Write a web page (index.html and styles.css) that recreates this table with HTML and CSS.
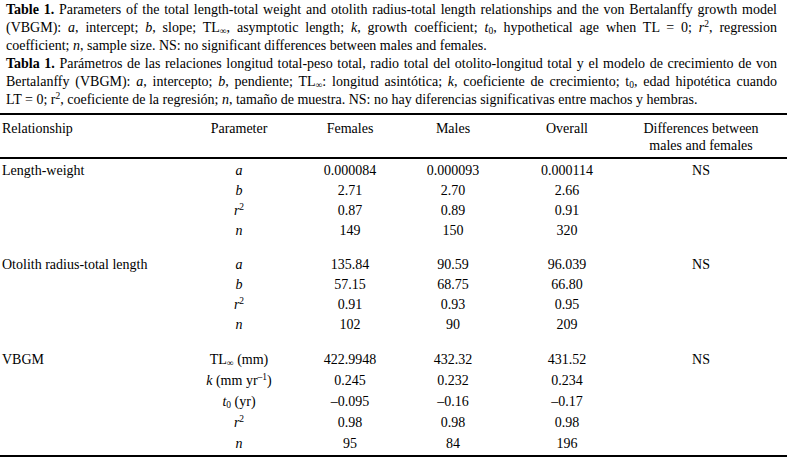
FILE: index.html
```html
<!DOCTYPE html>
<html lang="en">
<head>
<meta charset="utf-8">
<title>Table 1</title>
<link rel="stylesheet" href="styles.css">
</head>
<body>
<div class="caption">
  <p class="para">
    <span class="ln"><b>Table 1.</b> Parameters of the total length-total weight and otolith radius-total length relationships and the von Bertalanffy growth model</span>
    <span class="ln">(VBGM): <i>a</i>, intercept; <i>b</i>, slope; TL<sub>∞</sub>, asymptotic length; <i>k</i>, growth coefficient; <i>t</i><sub>0</sub>, hypothetical age when TL = 0; <i>r</i><sup>2</sup>, regression</span>
    <span class="ln last">coefficient; <i>n</i>, sample size. NS: no significant differences between males and females.</span>
  </p>
  <p class="para">
    <span class="ln"><b>Tabla 1.</b> Parámetros de las relaciones longitud total-peso total, radio total del otolito-longitud total y el modelo de crecimiento de von</span>
    <span class="ln">Bertalanffy (VBGM): <i>a</i>, intercepto; <i>b</i>, pendiente; TL<sub>∞</sub>: longitud asintótica; <i>k</i>, coeficiente de crecimiento; t<sub>0</sub>, edad hipotética cuando</span>
    <span class="ln last">LT = 0; r<sup>2</sup>, coeficiente de la regresión; <i>n</i>, tamaño de muestra. NS: no hay diferencias significativas entre machos y hembras.</span>
  </p>
</div>
<table class="data">
  <colgroup>
    <col class="c-rel">
    <col class="c-par">
    <col class="c-fem">
    <col class="c-mal">
    <col class="c-all">
    <col class="c-dif">
  </colgroup>
  <thead>
    <tr>
      <th class="rel">Relationship</th>
      <th>Parameter</th>
      <th>Females</th>
      <th>Males</th>
      <th>Overall</th>
      <th class="dif">Differences between<br>males and females</th>
    </tr>
  </thead>
  <tbody class="group">
    <tr><td class="rel">Length-weight</td><td><i>a</i></td><td>0.000084</td><td>0.000093</td><td>0.000114</td><td class="dif">NS</td></tr>
    <tr><td class="rel"></td><td><i>b</i></td><td>2.71</td><td>2.70</td><td>2.66</td><td class="dif"></td></tr>
    <tr><td class="rel"></td><td><i>r</i><sup>2</sup></td><td>0.87</td><td>0.89</td><td>0.91</td><td class="dif"></td></tr>
    <tr><td class="rel"></td><td><i>n</i></td><td>149</td><td>150</td><td>320</td><td class="dif"></td></tr>
  </tbody>
  <tbody class="group">
    <tr><td class="rel">Otolith radius-total length</td><td><i>a</i></td><td>135.84</td><td>90.59</td><td>96.039</td><td class="dif">NS</td></tr>
    <tr><td class="rel"></td><td><i>b</i></td><td>57.15</td><td>68.75</td><td>66.80</td><td class="dif"></td></tr>
    <tr><td class="rel"></td><td><i>r</i><sup>2</sup></td><td>0.91</td><td>0.93</td><td>0.95</td><td class="dif"></td></tr>
    <tr><td class="rel"></td><td><i>n</i></td><td>102</td><td>90</td><td>209</td><td class="dif"></td></tr>
  </tbody>
  <tbody class="group tall">
    <tr><td class="rel">VBGM</td><td>TL<sub>∞</sub> (mm)</td><td>422.9948</td><td>432.32</td><td>431.52</td><td class="dif">NS</td></tr>
    <tr><td class="rel"></td><td><i>k</i> (mm yr<sup>–1</sup>)</td><td>0.245</td><td>0.232</td><td>0.234</td><td class="dif"></td></tr>
    <tr><td class="rel"></td><td><i>t</i><sub>0</sub> (yr)</td><td>–0.095</td><td>–0.16</td><td>–0.17</td><td class="dif"></td></tr>
    <tr><td class="rel"></td><td><i>r</i><sup>2</sup></td><td>0.98</td><td>0.98</td><td>0.98</td><td class="dif"></td></tr>
    <tr><td class="rel"></td><td><i>n</i></td><td>95</td><td>84</td><td>196</td><td class="dif"></td></tr>
  </tbody>
</table>
</body>
</html>
```

FILE: styles.css
```css
html, body {
  margin: 0;
  padding: 0;
  background: #fff;
}

body {
  font-family: "Liberation Serif", "Times New Roman", serif;
  font-size: 14px;
  color: #000;
  width: 787px;
}

.caption {
  padding: 1px 10px 0 6px;
  line-height: 18px;
}

.para {
  margin: 0;
}

.ln {
  display: block;
  text-align: justify;
  text-align-last: justify;
  white-space: nowrap;
}

.ln.last {
  text-align-last: left;
}

sup, sub {
  font-size: 0.68em;
  line-height: 0;
}

sup {
  vertical-align: 0.5em;
}

sub {
  vertical-align: -0.25em;
}

.data {
  margin-top: 4px;
  width: 787px;
  table-layout: fixed;
  border-collapse: collapse;
  border-top: 2px solid #000;
  border-bottom: 2px solid #000;
}

.c-rel { width: 189px; }
.c-par { width: 100px; }
.c-fem { width: 122px; }
.c-mal { width: 84px; }
.c-all { width: 144px; }
.c-dif { width: 148px; }

.data th {
  font-weight: normal;
  text-align: center;
  vertical-align: top;
  line-height: 17px;
  padding: 5px 0 3px;
  border-bottom: 2px solid #000;
}

.data td {
  text-align: center;
  padding: 0;
  line-height: 20px;
  white-space: nowrap;
}

.data .rel {
  text-align: left;
  padding-left: 2px;
}

.data .dif {
  padding-right: 24px;
}

.group tr:first-child td {
  padding-top: 2px;
}

.group + .group tr:first-child td {
  padding-top: 14px;
}

.tall td {
  line-height: 21px;
}

.tall tr:last-child td {
  padding-bottom: 1px;
}
```
